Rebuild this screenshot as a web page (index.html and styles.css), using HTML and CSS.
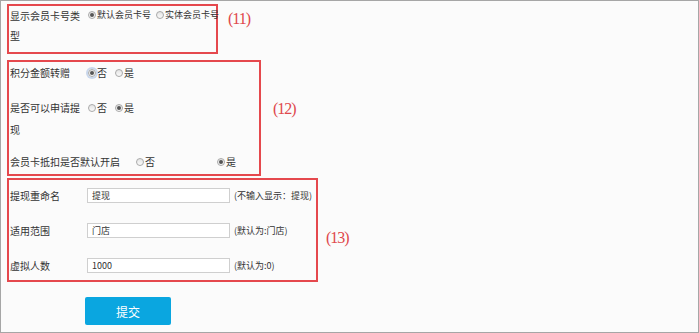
FILE: index.html
```html
<!DOCTYPE html>
<html lang="zh-CN">
<head>
    <meta charset="UTF-8">
    <meta name="viewport" content="width=device-width, initial-scale=1.0">
    <title>会员卡设置</title>
    <link rel="stylesheet" href="styles.css">
</head>
<body>
    <div class="page">
        <!-- (11) 会员卡号类型 -->
        <div class="group">
            <div class="box box-11">
                <div class="row">
                    <span class="label">显示会员卡号类型</span>
                    <label class="opt opt-small"><span class="radio checked"></span>默认会员卡号</label>
                    <label class="opt opt-small"><span class="radio"></span>实体会员卡号</label>
                </div>
            </div>
            <span class="tag tag-11">(11)</span>
        </div>

        <!-- (12) 积分 / 提现 / 抵扣 -->
        <div class="group">
            <div class="box box-12">
                <div class="row">
                    <span class="label">积分金额转赠</span>
                    <label class="opt"><span class="radio checked focus"></span>否</label>
                    <label class="opt"><span class="radio"></span>是</label>
                </div>
                <div class="row row-2">
                    <span class="label">是否可以申请提现</span>
                    <label class="opt"><span class="radio"></span>否</label>
                    <label class="opt"><span class="radio checked"></span>是</label>
                </div>
                <div class="row row-3">
                    <span class="label label-long">会员卡抵扣是否默认开启</span>
                    <label class="opt opt-wide"><span class="radio"></span>否</label>
                    <label class="opt"><span class="radio checked"></span>是</label>
                </div>
            </div>
            <span class="tag tag-12">(12)</span>
        </div>

        <!-- (13) 文本设置 -->
        <div class="group">
            <div class="box box-13">
                <div class="field">
                    <span class="label">提现重命名</span>
                    <input class="text" type="text" value="提现">
                    <span class="hint">(不输入显示：提现)</span>
                </div>
                <div class="field">
                    <span class="label">适用范围</span>
                    <input class="text" type="text" value="门店">
                    <span class="hint">(默认为:门店)</span>
                </div>
                <div class="field">
                    <span class="label">虚拟人数</span>
                    <input class="text" type="text" value="1000">
                    <span class="hint">(默认为:0)</span>
                </div>
            </div>
            <span class="tag tag-13">(13)</span>
        </div>

        <button class="submit">提交</button>
    </div>
</body>
</html>
```

FILE: styles.css
```css
/* 页面整体 */
body {
    margin: 0;
    padding: 0;
    font-family: "Noto Sans CJK SC", "DejaVu Sans", sans-serif;
    color: #333;
}

.page {
    box-sizing: border-box;
    width: 699px;
    height: 333px;
    border: 1px solid #a6a6a6;
    background-color: #fbfbfb;
    padding: 3px 0 0 6px;
}

/* 红框分组 */
.group {
    display: flex;
    align-items: flex-start;
}

.box {
    border: 2px solid #e5484d;
    box-sizing: border-box;
}

.box-11 {
    width: 211px;
    height: 50px;
}

.box-12 {
    width: 254px;
    height: 116px;
    margin-top: 6px;
}

.box-13 {
    width: 311px;
    height: 104px;
    margin-top: 2px;
    padding-top: 4px;
}

/* 行与标签 */
.row {
    display: flex;
    align-items: flex-start;
    font-size: 10px;
    line-height: 20px;
    padding-left: 1px;
}

.box-12 .row {
    line-height: 22px;
}

.row-2 {
    margin-top: 13px;
}

.row-3 {
    margin-top: 10px;
}

.label {
    width: 78px;
    flex-shrink: 0;
}

.label-long {
    width: auto;
}

/* 单选 */
.opt {
    display: flex;
    align-items: center;
    height: 20px;
    margin-right: 8px;
    white-space: nowrap;
}

.box-12 .opt {
    height: 22px;
}

.opt-small {
    font-size: 9px;
    height: 18px;
    margin-right: 5px;
}

.opt-wide {
    margin-left: 16px;
    margin-right: 62px;
}

.radio {
    box-sizing: border-box;
    width: 8px;
    height: 8px;
    border: 1px solid #a9a9a9;
    border-radius: 50%;
    background: linear-gradient(#e4e4e4, #fafafa);
    margin-right: 1px;
    position: relative;
}

.radio.checked::after {
    content: "";
    position: absolute;
    left: 1px;
    top: 1px;
    width: 4px;
    height: 4px;
    border-radius: 50%;
    background-color: #555;
}

.radio.focus {
    box-shadow: 0 0 0 2px #c9d7ec;
}

/* 文本输入 */
.field {
    display: flex;
    align-items: center;
    height: 22px;
    margin-bottom: 13px;
    font-size: 10px;
    padding-left: 1px;
}

.field .label {
    width: 77px;
}

.text {
    box-sizing: border-box;
    width: 143px;
    height: 15px;
    border: 1px solid #cfcfcf;
    background-color: #fff;
    padding: 0 4px;
    font-family: "Noto Sans CJK SC", "DejaVu Sans", sans-serif;
    font-size: 9px;
    color: #333;
    outline: none;
}

.hint {
    font-size: 9px;
    margin-left: 4px;
}

/* 编号 */
.tag {
    font-family: "Liberation Serif", serif;
    font-size: 16px;
    letter-spacing: -1px;
    color: #e0474c;
}

.tag-11 {
    margin: 6px 0 0 10px;
}

.tag-12 {
    margin: 46px 0 0 12px;
}

.tag-13 {
    margin: 53px 0 0 8px;
}

/* 提交按钮 */
.submit {
    display: block;
    width: 86px;
    height: 28px;
    margin: 15px 0 0 78px;
    border: none;
    border-radius: 2px;
    background-color: #0aa6e0;
    color: white;
    font-family: "Noto Sans CJK SC", "DejaVu Sans", sans-serif;
    font-size: 12px;
    cursor: pointer;
}
```
